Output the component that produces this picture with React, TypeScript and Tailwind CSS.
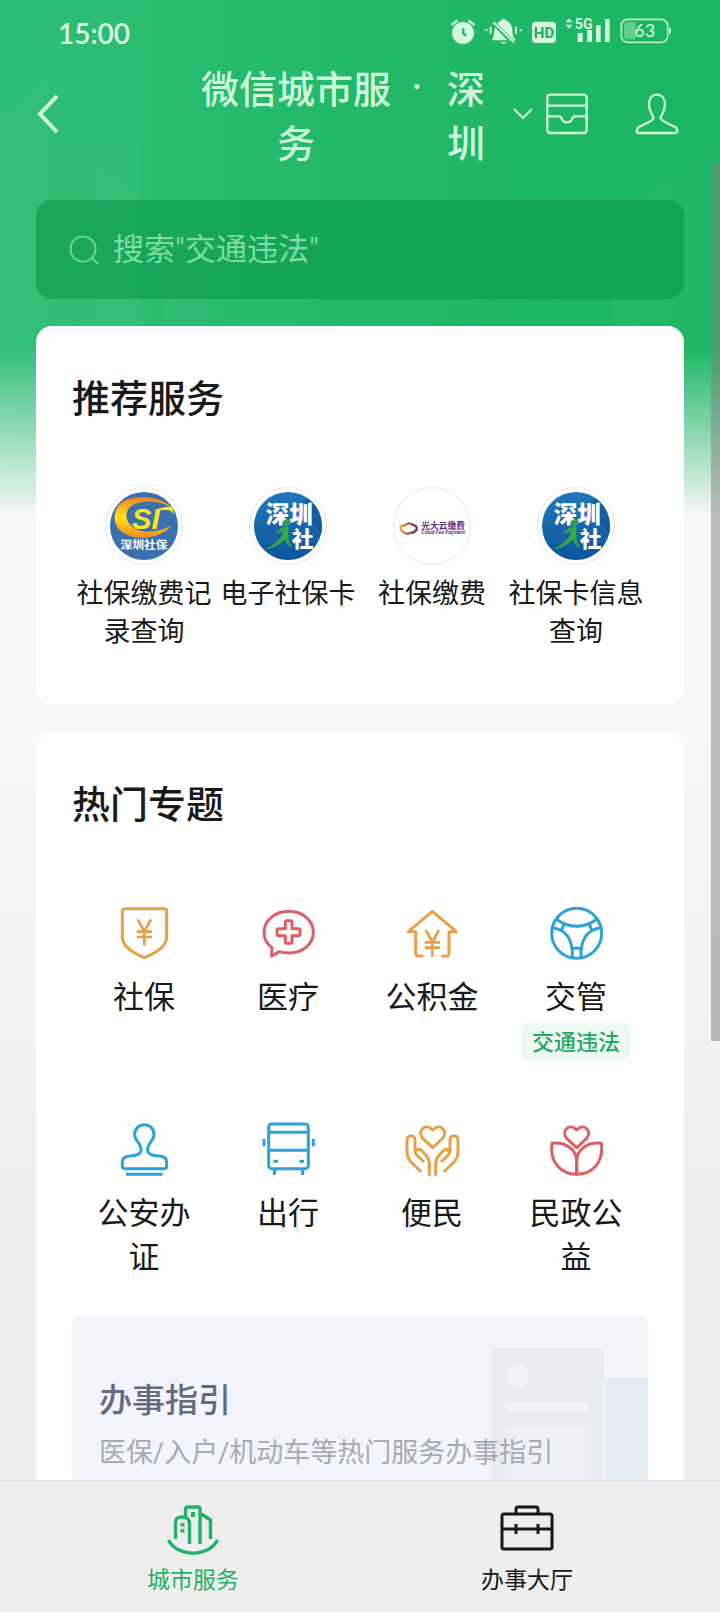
import type { ReactNode } from "react";

function StatusIcons() {
  return (
    <svg viewBox="273 54 663 84" className="h-7 w-[221px]" fill="none" aria-label="状态栏">
      <g fill="#d3f8dd">
        <circle cx="309" cy="102" r="33" />
        <path d="M310 88V104L319 110" stroke="#22b868" strokeWidth="7" />
        <path d="M274 78L293 64M344 78L325 64" stroke="#d3f8dd" strokeWidth="7" />
        <path d="M395 124C405 112 400 92 408 78C414 68 422 66 424 64Q431 54 438 64C458 72 457 92 458 106Q460 118 468 124Z" />
        <path d="M422 129H440Q431 139 422 129Z" />
        <path d="M397 68L460 132" stroke="#22b868" strokeWidth="13" />
        <path d="M400 70L462 130" stroke="#d3f8dd" strokeWidth="6" />
        <path d="M392 84V104M468 84V104M379 91V97M482 91V97" stroke="#d3f8dd" strokeWidth="6" />
        <rect x="516" y="68" width="72" height="64" rx="11" />
        <path d="M616 70L627 58L638 70ZM616 77L627 89L638 77Z" />
        <path d="M653 102H668V129H653ZM681 93H696V129H681ZM708 79H722V129H708ZM735 60H749V129H735Z" />
        <rect x="784" y="61" width="139" height="69" rx="19" fill="none" stroke="#b4f0c6" strokeWidth="5" />
        <path d="M803 70H826V121H803Q792 121 792 110V81Q792 70 803 70Z" fill="#5fd08d" />
        <path d="M927 84Q934 86 934 95Q934 104 927 106Z" />
        <text x="552" y="116" textAnchor="middle" fontSize="45" fontWeight="700" fill="#22a865" className="font-['Roboto',sans-serif]">HD</text>
        <text x="671" y="91" textAnchor="middle" fontSize="43" fontWeight="700" className="font-['Roboto',sans-serif]">5G</text>
        <text x="854" y="114" textAnchor="middle" fontSize="54" fontWeight="500" className="font-['Lato',sans-serif]">63</text>
      </g>
    </svg>
  );
}

function Skyline() {
  return (
    <svg viewBox="0 0 720 515" preserveAspectRatio="none" className="h-full w-full" aria-hidden="true">
      <g fill="#fff" fillOpacity="0.025">
        <path d="M0 120L58 66V515H0Z" />
        <path d="M94 160L140 196V515H94Z" />
        <path d="M58 142H140V515H58Z" />
        <path d="M162 230H210V515H162Z" />
        <path d="M612 515V214L720 140V515Z" />
      </g>
    </svg>
  );
}

function CsiLogo() {
  return (
    <svg viewBox="152 68 202 202" className="size-[68px] rounded-full">
      <defs>
        <linearGradient id="ring" x1="0" y1="0" x2="0" y2="1">
          <stop offset="0" stopColor="#f0801f" />
          <stop offset="0.5" stopColor="#ffe21a" />
          <stop offset="1" stopColor="#f08a1c" />
        </linearGradient>
      </defs>
      <rect x="152" y="68" width="202" height="202" fill="#3a70ae" />
      <path d="M333 114C308 82 240 74 200 92C156 112 156 166 190 188C226 214 296 210 334 168C296 188 250 192 222 174C192 152 194 118 226 104C256 92 300 94 333 114Z" fill="url(#ring)" />
      <text x="258" y="179" textAnchor="middle" fontSize="88" fontWeight="700" fontStyle="italic" fill="#ffe51c" className="font-['Liberation_Sans',sans-serif]">SI</text>
      <path d="M282 126Q302 110 338 111L341 134Q330 119 318 122Q300 121 282 126Z" fill="#ffe51c" />
      <text x="253" y="238" textAnchor="middle" fontSize="35" fontWeight="700" fill="#fff" className="font-['Noto_Sans_CJK_SC',sans-serif]">深圳社保</text>
    </svg>
  );
}

function ShenzhenLogo() {
  return (
    <svg viewBox="584 68 202 202" className="size-[68px] rounded-full">
      <defs>
        <linearGradient id="sea" x1="0" y1="0" x2="0" y2="1">
          <stop offset="0" stopColor="#2378b8" />
          <stop offset="1" stopColor="#0d549c" />
        </linearGradient>
      </defs>
      <rect x="584" y="68" width="202" height="202" fill="url(#sea)" />
      <path d="M735 95Q750 80 790 90V200Q745 160 735 95Z" fill="#0f5fa0" />
      <g fill="#fff" fontWeight="900" className="font-['Noto_Sans_CJK_SC',sans-serif]">
        <text x="619" y="159" fontSize="70">深圳</text>
        <text x="697" y="231" fontSize="64">社</text>
      </g>
      <circle cx="681" cy="160" r="10" fill="#2fa84b" />
      <path d="M648 194C656 178 668 170 684 170C689 180 685 196 687 208C689 220 694 228 699 236C688 232 680 222 676 208C664 222 642 236 616 238C644 226 664 208 671 186Q660 186 648 194Z" fill="#36a843" />
    </svg>
  );
}

function CloudPayLogo() {
  return (
    <svg viewBox="115 68 202 202" className="size-[68px]">
      <defs>
        <linearGradient id="cloud" x1="0" y1="0" x2="1" y2="0">
          <stop offset="0" stopColor="#eda03a" />
          <stop offset="1" stopColor="#6b2478" />
        </linearGradient>
      </defs>
      <path d="M124 179Q118 166 134 168Q146 156 160 166Q174 170 170 180Q164 190 154 189Q136 198 124 179Z" fill="none" stroke="url(#cloud)" strokeWidth="7" />
      <text x="249" y="179" textAnchor="middle" fontSize="26" fontWeight="700" fill="#5d2a7a" className="font-['Noto_Sans_CJK_SC',sans-serif]">光大云缴费</text>
      <text x="249" y="194" textAnchor="middle" fontSize="14" fontWeight="700" fontStyle="italic" fill="#5d2a7a" className="font-['Liberation_Sans',sans-serif]">Cloud Fee Payment</text>
    </svg>
  );
}

function TopicIcon({ color, children }: { color: string; children: ReactNode }) {
  return (
    <svg viewBox="0 0 168 168" fill="none" strokeWidth="9" strokeLinejoin="round" className={`size-14 stroke-current ${color}`} aria-hidden="true">
      {children}
    </svg>
  );
}

const ORANGE = "text-[#e8a048]";
const RED = "text-[#dc5f64]";
const BLUE = "text-[#2ba2da]";
const HEART = "M86 80L56 52C38 30 64 4 86 27C108 4 134 30 116 52Z";

const services = [
  { name: "社保缴费记录查询", logo: <CsiLogo /> },
  { name: "电子社保卡", logo: <ShenzhenLogo /> },
  { name: "社保缴费", logo: <CloudPayLogo /> },
  { name: "社保卡信息查询", logo: <ShenzhenLogo /> },
];

const topics: { name: string; tag?: string; icon: ReactNode }[] = [
  {
    name: "社保",
    icon: (
      <TopicIcon color={ORANGE}>
        <path d="M27 11H144Q152 11 152 19V95C152 125 120 143 85 158C50 143 19 125 19 95V19Q19 11 27 11Z" />
        <path d="M65 43L85 79L105 43M85 79V122M62 80H108M62 96H108" strokeWidth="8" />
      </TopicIcon>
    ),
  },
  {
    name: "医疗",
    icon: (
      <TopicIcon color={RED}>
        <path d="M35 153L36 128C18 116 12 100 12 82C12 46 46 19 86 19C128 19 160 46 160 82C160 118 128 144 88 144C76 144 66 143 58 140Z" />
        <path d="M76 51Q76 47 80 47H92Q96 47 96 51V71H115Q120 71 120 76V87Q120 92 115 92H96V111Q96 115 92 115H80Q76 115 76 111V92H56Q51 92 51 87V76Q51 71 56 71H76Z" />
      </TopicIcon>
    ),
  },
  {
    name: "公积金",
    icon: (
      <TopicIcon color={ORANGE}>
        <path d="M58 153H43Q35 153 35 145V80H13L85 19L157 80H135V145Q135 153 127 153H112" />
        <path d="M65 75L85 111L105 75M85 111V156M62 112H108M62 128H108" strokeWidth="8" />
      </TopicIcon>
    ),
  },
  {
    name: "交管",
    tag: "交通违法",
    icon: (
      <TopicIcon color={BLUE}>
        <circle cx="86" cy="85" r="75" />
        <path d="M24 42Q86 86 148 42M13 68C48 72 76 96 73 158M159 68C124 72 96 96 99 158M73 130H99M50 54L40 76M122 54L132 76" />
      </TopicIcon>
    ),
  },
  {
    name: "公安办证",
    icon: (
      <TopicIcon color={BLUE}>
        <path d="M74 93C80 80 70 70 64 60A29 29 0 1 1 106 60C100 70 90 80 96 93C102 106 122 103 134 106Q152 108 152 124V136Q152 143 145 143H26Q19 143 19 136V124Q19 108 37 106C48 103 68 106 74 93Z" />
        <path d="M30 160H140" />
      </TopicIcon>
    ),
  },
  {
    name: "出行",
    icon: (
      <TopicIcon color={BLUE}>
        <rect x="26" y="9" width="119" height="134" rx="9" />
        <path d="M26 34H145M26 88H145M43 145V162M128 145V162M12 54V76M160 54V76" />
        <path d="M40 121H54M118 121H132" />
      </TopicIcon>
    ),
  },
  {
    name: "便民",
    icon: (
      <TopicIcon color={ORANGE}>
        <path d={HEART} />
        <path d="M52 153L20 122Q9 108 9 90V56A12 12 0 0 1 33 56V90M60 123L38 102Q30 93 38 87Q46 82 55 91L67 104Q76 114 76 128V164" />
        <path d="M119 153L151 122Q162 108 162 90V56A12 12 0 0 0 138 56V90M111 123L133 102Q141 93 133 87Q125 82 116 91L104 104Q95 114 95 128V164" />
      </TopicIcon>
    ),
  },
  {
    name: "民政公益",
    icon: (
      <TopicIcon color={RED}>
        <path d={HEART} />
        <path d="M12 67C52 62 86 85 86 120V160C40 160 4 125 12 67Z" />
        <path d="M160 67C120 62 86 85 86 120V160C132 160 168 125 160 67Z" />
      </TopicIcon>
    ),
  },
];

function Card({ title, children }: { title: string; children: ReactNode }) {
  return (
    <section className="rounded-2xl bg-white px-9 pt-[43px]">
      <h2 className="text-[38px] leading-[54px] font-medium">{title}</h2>
      {children}
    </section>
  );
}

export default function App() {
  return (
    <div className="relative flex h-screen flex-col overflow-hidden bg-linear-to-b from-[#f7f7f7] from-45% to-[#ededed] to-80% font-['Noto_Sans_CJK_SC',sans-serif] text-[#191919]">
      <div className="absolute inset-x-0 top-0 h-[515px] bg-linear-to-r from-[#2fbf75] via-[#22b869] to-[#1ab662] mask-[linear-gradient(to_bottom,black_68%,transparent)]">
        <Skyline />
      </div>

      <div className="relative flex min-h-0 flex-1 flex-col">
        <div className="flex h-[62px] shrink-0 items-center justify-between pr-12 pl-[58px] text-[#dcfbe6]">
          <time className="pt-1 font-['Lato','Noto_Sans_CJK_SC',sans-serif] text-[28px] leading-9 font-semibold">15:00</time>
          <StatusIcons />
        </div>

        <header className="-mt-0.5 flex shrink-0 items-center pr-[41px] pl-9 text-[#cff8da]">
          <button type="button" aria-label="返回" className="py-4">
            <svg viewBox="0 0 24 40" className="h-10 w-6" fill="none" stroke="currentColor" strokeWidth="4">
              <path d="M21 2L4 20L21 38" />
            </svg>
          </button>
          <h1 className="ml-auto flex text-center text-[38px] leading-[54px] font-medium">
            <span className="w-[190px]">微信城市服务</span>
            <span className="w-14 pr-1 font-['Roboto','Noto_Sans_CJK_SC',sans-serif]">·</span>
            <span className="w-[38px]">深圳</span>
          </h1>
          <button type="button" aria-label="切换城市" className="ml-7">
            <svg viewBox="0 0 20 12" className="h-3 w-5" fill="none" stroke="currentColor" strokeWidth="2">
              <path d="M1 1L10 10L19 1" />
            </svg>
          </button>
          <button type="button" aria-label="消息" className="ml-3">
            <svg viewBox="0 0 132 132" className="size-11" fill="none" stroke="currentColor" strokeWidth="7">
              <rect x="7" y="8" width="118" height="115" rx="9" />
              <path d="M7 41H125M7 73H42Q48 73 50 80Q54 91 66 91Q78 91 82 80Q84 73 90 73H125" />
            </svg>
          </button>
          <button type="button" aria-label="我的" className="ml-[46px]">
            <svg viewBox="0 0 132 132" className="size-11" fill="none" stroke="currentColor" strokeWidth="7">
              <path d="M55 80C57 70 42 62 42 38C42 18 52 8 66 8C80 8 90 18 90 38C90 62 75 70 77 80Q79 86 120 105Q128 110 127 118Q126 123 120 123H12Q5 123 5 118Q5 110 12 105Q53 86 55 80Z" />
            </svg>
          </button>
        </header>

        <main className="mt-8 flex min-h-0 flex-1 flex-col overflow-y-auto px-9 [scrollbar-width:none]">
          <label className="flex h-[99px] shrink-0 items-center gap-[13px] rounded-2xl bg-[#0e9c50]/70 pl-8">
            <svg viewBox="0 0 32 32" className="size-8 text-[#6fd597]" fill="none" stroke="currentColor" strokeWidth="2">
              <circle cx="15" cy="15" r="12.5" />
              <path d="M24 24L30 30" />
            </svg>
            <input
              type="search"
              aria-label="搜索服务"
              placeholder={'搜索"交通违法"'}
              className="min-w-0 flex-1 bg-transparent font-['Roboto','Noto_Sans_CJK_SC',sans-serif] text-[31px] leading-[44px] text-white outline-none placeholder:text-[#7fdca3]"
            />
          </label>

          <div className="mt-[27px] flex flex-col gap-7">
            <Card title="推荐服务">
              <ul className="mt-16 grid grid-cols-4 pb-[55px]">
                {services.map((s) => (
                  <li key={s.name}>
                    <a href="#service" className="flex flex-col items-center gap-2 text-center text-[27px] leading-[38px]">
                      <span className="flex size-[78px] items-center justify-center rounded-full border border-[#e6e6e6] bg-white">{s.logo}</span>
                      <span className="px-1">{s.name}</span>
                    </a>
                  </li>
                ))}
              </ul>
            </Card>

            <Card title="热门专题">
              <ul className="mt-[76px] grid grid-cols-4 gap-y-[61px]">
                {topics.map((t) => (
                  <li key={t.name}>
                    <a href="#topic" className="flex flex-col items-center text-center text-[31px] leading-[44px]">
                      {t.icon}
                      <span className="mt-3 px-6">{t.name}</span>
                      {t.tag && <span className="mt-1.5 rounded-md bg-[#edf9f2] px-[10px] pb-0.5 text-[22px] leading-[35px] font-medium text-[#22ab63]">{t.tag}</span>}
                    </a>
                  </li>
                ))}
              </ul>
              <a href="#guide" className="relative mt-[39px] mb-9 block h-[220px] overflow-hidden rounded-lg bg-linear-to-b from-[#f3f4f9] to-[#f4f5fb] px-[27px] pt-[58px]">
                <svg viewBox="0 0 160 190" className="absolute top-[30px] right-0 h-[190px] w-40" aria-hidden="true">
                  <rect x="118" y="32" width="42" height="158" fill="#e6eaf3" />
                  <rect x="2" y="2" width="114" height="188" rx="6" fill="#eaecf2" />
                  <circle cx="30" cy="30" r="11" fill="#f2f3f8" />
                  <rect x="18" y="56" width="82" height="9" rx="2" fill="#f2f3f8" />
                  <rect x="18" y="80" width="82" height="110" rx="2" fill="#eef0f6" />
                </svg>
                <h3 className="relative text-[33px] leading-[48px] font-medium text-[#656a82]">办事指引</h3>
                <p className="relative mt-[11px] font-['Roboto','Noto_Sans_CJK_SC',sans-serif] text-[27px] leading-10 text-[#a9abb2]">医保/入户/机动车等热门服务办事指引</p>
              </a>
            </Card>
          </div>
        </main>
      </div>

      <nav className="relative flex shrink-0 border-t border-[#e0e0e0] bg-[#eeeeee] px-[26px] pt-6 pb-[18px] text-[23px] leading-8">
        <a href="#city" aria-current="page" className="flex flex-1 flex-col items-center gap-[5px] text-[#22b166]">
          <svg viewBox="0 0 52 52" className="size-[52px]" fill="none" stroke="currentColor" strokeWidth="3.4">
            <path d="M1.5 35C10 52.5 42 52.5 50.5 35" />
            <path d="M8.5 34V17C8.5 14 11 12 15 12Q22 12 22.5 18V39M18.5 12V4Q18.5 2 21 2H31Q33 2 33 4V39M33 8L43.5 15V34" />
            <path d="M26 7V12M15.5 18V21.5M15.5 24V27.5" strokeWidth="4" />
          </svg>
          城市服务
        </a>
        <a href="#hall" className="flex flex-1 flex-col items-center gap-[5px]">
          <svg viewBox="0 0 54 52" className="h-[52px] w-[54px]" fill="none" stroke="currentColor" strokeWidth="3">
            <rect x="2" y="9" width="50" height="35" rx="2" />
            <path d="M16 9V4Q16 2 18 2H36Q38 2 38 4V9M2 24H52M16 19V29M38 19V29" />
          </svg>
          办事大厅
        </a>
      </nav>

      <div className="absolute top-[163px] right-0 h-[878px] w-[9px] bg-[#808080]/50" />
    </div>
  );
}
